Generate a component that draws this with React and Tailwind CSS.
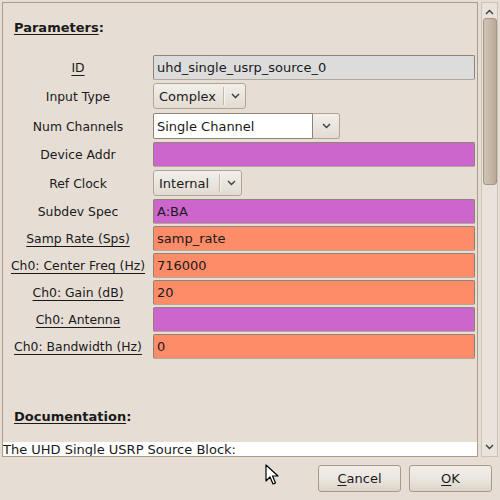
import React from 'react';

const rows = [
  { label: 'ID', kind: 'entry', value: 'uhd_single_usrp_source_0', color: 'bg-[#dcdcdc]', u: true, h: 'h-[26px]' },
  { label: 'Input Type', kind: 'combo', value: 'Complex', w: 'w-[93px]' },
  { label: 'Num Channels', kind: 'comboEntry', value: 'Single Channel' },
  { label: 'Device Addr', kind: 'entry', value: '', color: 'bg-[#cc66cc]' },
  { label: 'Ref Clock', kind: 'combo', value: 'Internal', w: 'w-[89px]' },
  { label: 'Subdev Spec', kind: 'entry', value: 'A:BA', color: 'bg-[#cc66cc]' },
  { label: 'Samp Rate (Sps)', kind: 'entry', value: 'samp_rate', color: 'bg-[#ff8c69]', u: true },
  { label: 'Ch0: Center Freq (Hz)', kind: 'entry', value: '716000', color: 'bg-[#ff8c69]', u: true },
  { label: 'Ch0: Gain (dB)', kind: 'entry', value: '20', color: 'bg-[#ff8c69]', u: true },
  { label: 'Ch0: Antenna', kind: 'entry', value: '', color: 'bg-[#cc66cc]', u: true },
  { label: 'Ch0: Bandwidth (Hz)', kind: 'entry', value: '0', color: 'bg-[#ff8c69]', u: true },
];

function Chevron({ up }) {
  return (
    <svg width="9" height="6" viewBox="0 0 9 6" className="block">
      <path
        d={up ? 'M1 5 L4.5 1.5 L8 5' : 'M1 1 L4.5 4.5 L8 1'}
        fill="none"
        stroke="#3c3c3c"
        strokeWidth="1.4"
      />
    </svg>
  );
}

function Field({ row }) {
  if (row.kind === 'entry') {
    return (
      <div className={`${row.h || 'h-[25px]'} flex items-center`}>
        <div className={`w-full h-[25px] ${row.color} border border-[#8f8373] border-b-[#b3a797] rounded-[2px] pl-[3px] flex items-center leading-none`}>
          {row.value}
        </div>
      </div>
    );
  }
  if (row.kind === 'combo') {
    return (
      <div className="h-[28px] flex items-start pt-[1px]">
        <div className={`${row.w} h-[26px] rounded-[3px] border border-[#b2a595] bg-gradient-to-b from-[#f2efeb] to-[#e2dbd2] flex items-center`}>
          <span className="pl-[5px] flex-1">{row.value}</span>
          <span className="w-px h-[18px] bg-[#c3b8aa] border-r border-r-[#f7f4f0] box-content"></span>
          <span className="w-[20px] flex justify-center">
            <Chevron />
          </span>
        </div>
      </div>
    );
  }
  return (
    <div className="h-[28px] flex items-start pt-[1px]">
      <div className="w-[160px] h-[26px] bg-white border border-[#8f8373] rounded-l-[2px] pl-[3px] flex items-center">
        {row.value}
      </div>
      <div className="w-[27px] h-[26px] rounded-r-[3px] border border-l-0 border-[#b2a595] bg-gradient-to-b from-[#f2efeb] to-[#e2dbd2] flex items-center justify-center">
        <Chevron />
      </div>
    </div>
  );
}

function Button({ children }) {
  return (
    <div className="w-[83px] h-[27px] rounded-[3px] border border-[#a79a89] bg-gradient-to-b from-[#f1eee9] via-[#ebe6e0] to-[#dcd4ca] flex items-center justify-center">
      {children}
    </div>
  );
}

export default function App() {
  return (
    <div className="w-[500px] h-[500px] bg-[#e6ded5] text-[13px] text-[#1a1a1a] font-['DejaVu_Sans',sans-serif] flex flex-col overflow-hidden relative">
      <div className="flex pt-[2px] pl-[2px]">
        {/* scrolled window */}
        <div className="w-[476px] h-[455px] border border-[#a99c8c] overflow-hidden flex flex-col">
          <div className="pt-[17px] pl-[11px] font-bold leading-[15px]">
            <span className="underline underline-offset-[2px]">Parameters</span>:
          </div>
          <div className="mt-[19px] grid grid-cols-[150px_1fr] gap-y-[2px] pr-[2px] leading-[15px]">
            {rows.map((r) => (
              <React.Fragment key={r.label}>
                <div className="flex items-center justify-center text-[12.4px]">
                  <span className={r.u ? 'underline underline-offset-[3px]' : ''}>{r.label}</span>
                </div>
                <Field row={r} />
              </React.Fragment>
            ))}
          </div>
          <div className="mt-[50px] pl-[11px] font-bold leading-[15px]">
            <span className="underline underline-offset-[2px]">Documentation</span>:
          </div>
          <div className="mt-[18px] bg-white leading-[15px] h-[40px]">
            The UHD Single USRP Source Block:
          </div>
        </div>
        {/* scrollbar */}
        <div className="ml-[3px] w-[17px] h-[455px] border border-[#cdc3b7] bg-[#e9e3dc] flex flex-col items-center">
          <div className="h-[15px] flex items-center justify-center pt-[2px]">
            <Chevron up />
          </div>
          <div className="w-[14px] h-[167px] rounded-[3px] border border-[#a69583] bg-gradient-to-r from-[#cfc2b4] via-[#c6b8a8] to-[#b9a897]"></div>
          <div className="flex-1"></div>
          <div className="h-[16px] flex items-center justify-center pb-[3px]">
            <Chevron />
          </div>
        </div>
      </div>
      <div className="flex justify-end gap-[8px] pr-[8px] mt-[8px]">
        <Button>
          <span className="underline underline-offset-[2px]">C</span>ancel
        </Button>
        <Button>
          <span className="underline underline-offset-[2px]">O</span>K
        </Button>
      </div>
      {/* mouse pointer */}
      <svg className="absolute left-[265px] top-[464px]" width="14" height="22" viewBox="0 0 14 22">
        <path d="M1 1 L1 17 L5 13 L8 20 L10.5 19 L7.5 12 L13 12 Z" fill="#ffffff" stroke="#000000" strokeWidth="1.2" strokeLinejoin="round" />
      </svg>
    </div>
  );
}
